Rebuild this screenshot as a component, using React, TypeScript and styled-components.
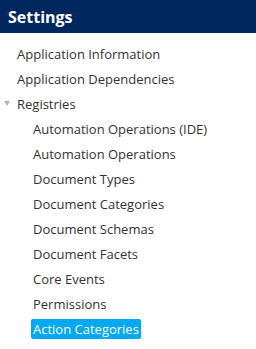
import React from 'react';
import styled, { createGlobalStyle } from 'styled-components';

const GlobalStyle = createGlobalStyle`
  html, body {
    margin: 0;
    padding: 0;
    background: #fff;
    font-family: "Open Sans", "Noto Sans", sans-serif;
  }
`;

const Panel = styled.div`
  width: 256px;
  height: 349px;
  overflow: hidden;
  display: flex;
  flex-direction: column;
`;

const Header = styled.div`
  height: 33px;
  background: #00275e;
  color: #fff;
  font-size: 16px;
  font-weight: 700;
  display: flex;
  align-items: center;
  padding-left: 8px;
  flex-shrink: 0;
`;

const Tree = styled.ul`
  list-style: none;
  margin: 0;
  padding: 8px 0 0 0;
`;

const Row = styled.li<{ $depth: number }>`
  height: 25px;
  display: flex;
  align-items: center;
  padding-left: ${p => (p.$depth === 0 ? 15 : 31)}px;
  font-size: 13px;
  color: #333;
  white-space: nowrap;
  position: relative;
`;

const Toggle = styled.span`
  position: absolute;
  left: 4px;
  top: 10px;
  width: 0;
  height: 0;
  border-left: 3px solid transparent;
  border-right: 3px solid transparent;
  border-top: 5px solid #b5b5b5;
`;

const Label = styled.span<{ $selected?: boolean }>`
  display: inline-block;
  line-height: 20px;
  padding: 0 2px;
  border-radius: 2px;
  background: ${p => (p.$selected ? '#00a9f1' : 'transparent')};
  color: ${p => (p.$selected ? '#fff' : '#333')};
  font-weight: ${p => (p.$selected ? 500 : 400)};
`;

interface Item {
  label: string;
  depth: number;
  open?: boolean;
  selected?: boolean;
}

const items: Item[] = [
  { label: 'Application Information', depth: 0 },
  { label: 'Application Dependencies', depth: 0 },
  { label: 'Registries', depth: 0, open: true },
  { label: 'Automation Operations (IDE)', depth: 1 },
  { label: 'Automation Operations', depth: 1 },
  { label: 'Document Types', depth: 1 },
  { label: 'Document Categories', depth: 1 },
  { label: 'Document Schemas', depth: 1 },
  { label: 'Document Facets', depth: 1 },
  { label: 'Core Events', depth: 1 },
  { label: 'Permissions', depth: 1 },
  { label: 'Action Categories', depth: 1, selected: true },
  { label: 'Vocabularies', depth: 1 },
];

const App: React.FC = () => {
  return (
    <Panel>
      <GlobalStyle />
      <Header>Settings</Header>
      <Tree>
        {items.map((item, i) => (
          <Row key={i} $depth={item.depth}>
            {item.open && <Toggle />}
            <Label $selected={item.selected}>{item.label}</Label>
          </Row>
        ))}
      </Tree>
    </Panel>
  );
};

export default App;
